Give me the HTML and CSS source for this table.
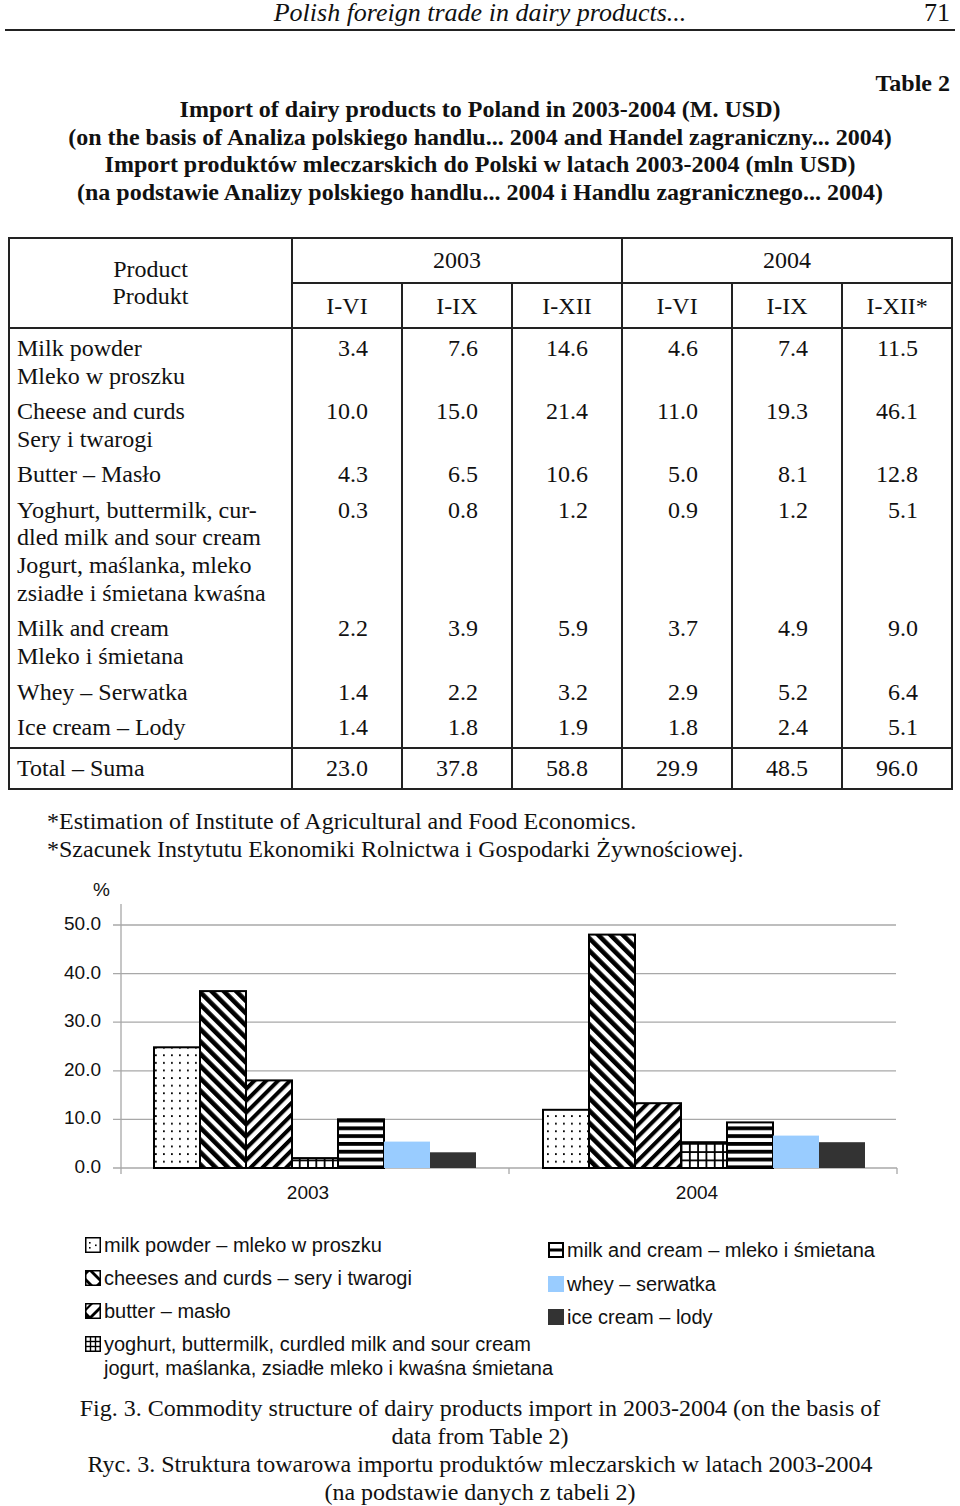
FILE: index.html
```html
<!DOCTYPE html>
<html lang="pl">
<head>
<meta charset="utf-8">
<title>Polish foreign trade in dairy products</title>
<link rel="stylesheet" href="styles.css">
</head>
<body>
<header class="running-head">
  <span class="running-title">Polish foreign trade in dairy products...</span>
  <span class="page-no">71</span>
</header>

<div class="table-label">Table 2</div>
<h1 class="title">Import of dairy products to Poland in 2003-2004 (M. USD)<br>(on the basis of Analiza polskiego handlu... 2004 and Handel zagraniczny... 2004)<br>Import produktów mleczarskich do Polski w latach 2003-2004 (mln USD)<br>(na podstawie Analizy polskiego handlu... 2004 i Handlu zagranicznego... 2004)</h1>

<table class="data">
  <colgroup>
    <col class="c-prod">
    <col class="c-num"><col class="c-num"><col class="c-num">
    <col class="c-num"><col class="c-num"><col class="c-num">
  </colgroup>
  <thead>
    <tr>
      <th rowspan="2" class="prod-head">Product<br>Produkt</th>
      <th colspan="3" class="year">2003</th>
      <th colspan="3" class="year">2004</th>
    </tr>
    <tr>
      <th class="per">I-VI</th><th class="per">I-IX</th><th class="per">I-XII</th>
      <th class="per">I-VI</th><th class="per">I-IX</th><th class="per">I-XII*</th>
    </tr>
  </thead>
  <tbody>
    <tr><td class="name">Milk powder<br>Mleko w proszku</td><td>3.4</td><td>7.6</td><td>14.6</td><td>4.6</td><td>7.4</td><td>11.5</td></tr>
    <tr><td class="name">Cheese and curds<br>Sery i twarogi</td><td>10.0</td><td>15.0</td><td>21.4</td><td>11.0</td><td>19.3</td><td>46.1</td></tr>
    <tr><td class="name">Butter – Masło</td><td>4.3</td><td>6.5</td><td>10.6</td><td>5.0</td><td>8.1</td><td>12.8</td></tr>
    <tr><td class="name">Yoghurt, buttermilk, cur-<br>dled milk and sour cream<br>Jogurt, maślanka, mleko<br>zsiadłe i śmietana kwaśna</td><td>0.3</td><td>0.8</td><td>1.2</td><td>0.9</td><td>1.2</td><td>5.1</td></tr>
    <tr><td class="name">Milk and cream<br>Mleko i śmietana</td><td>2.2</td><td>3.9</td><td>5.9</td><td>3.7</td><td>4.9</td><td>9.0</td></tr>
    <tr><td class="name">Whey – Serwatka</td><td>1.4</td><td>2.2</td><td>3.2</td><td>2.9</td><td>5.2</td><td>6.4</td></tr>
    <tr class="last"><td class="name">Ice cream – Lody</td><td>1.4</td><td>1.8</td><td>1.9</td><td>1.8</td><td>2.4</td><td>5.1</td></tr>
  </tbody>
  <tfoot>
    <tr><td class="name">Total – Suma</td><td>23.0</td><td>37.8</td><td>58.8</td><td>29.9</td><td>48.5</td><td>96.0</td></tr>
  </tfoot>
</table>

<p class="footnote">*Estimation of Institute of Agricultural and Food Economics.<br>*Szacunek Instytutu Ekonomiki Rolnictwa i Gospodarki Żywnościowej.</p>

<svg class="chart" width="960" height="340" viewBox="0 0 960 340" xmlns="http://www.w3.org/2000/svg">
  <defs>
    <pattern id="p-dots" patternUnits="userSpaceOnUse" width="8" height="7.6">
      <rect width="8" height="7.6" fill="#fff"/>
      <rect x="3" y="3" width="1.8" height="1.8" fill="#000"/>
    </pattern>
    <pattern id="p-back" patternUnits="userSpaceOnUse" width="8.7" height="8.7" patternTransform="rotate(-45)">
      <rect width="8.7" height="8.7" fill="#fff"/>
      <rect width="4.6" height="8.7" fill="#000"/>
    </pattern>
    <pattern id="p-fwd" patternUnits="userSpaceOnUse" width="8.4" height="8.4" patternTransform="rotate(45)">
      <rect width="8.4" height="8.4" fill="#fff"/>
      <rect width="4" height="8.4" fill="#000"/>
    </pattern>
    <pattern id="p-grid" patternUnits="userSpaceOnUse" width="8.3" height="8.3">
      <rect width="8.3" height="8.3" fill="#fff"/>
      <rect width="1.8" height="8.3" fill="#000"/>
      <rect width="8.3" height="1.8" fill="#000"/>
    </pattern>
    <pattern id="p-hstripe" patternUnits="userSpaceOnUse" width="8" height="7.8">
      <rect width="8" height="7.8" fill="#fff"/>
      <rect width="8" height="3.8" fill="#000"/>
    </pattern>
  </defs>

  <text class="unit" x="93" y="27">%</text>

  <g class="grid">
    <line x1="113" y1="56" x2="896" y2="56"/>
    <line x1="113" y1="104.6" x2="896" y2="104.6"/>
    <line x1="113" y1="153.2" x2="896" y2="153.2"/>
    <line x1="113" y1="201.8" x2="896" y2="201.8"/>
    <line x1="113" y1="250.4" x2="896" y2="250.4"/>
    <line x1="113" y1="299" x2="897" y2="299"/>
    <line x1="121" y1="35" x2="121" y2="305"/>
    <line x1="509" y1="299" x2="509" y2="305"/>
    <line x1="897" y1="299" x2="897" y2="305"/>
  </g>

  <g class="ylabels">
    <text x="101" y="61">50.0</text>
    <text x="101" y="109.6">40.0</text>
    <text x="101" y="158.2">30.0</text>
    <text x="101" y="206.8">20.0</text>
    <text x="101" y="255.4">10.0</text>
    <text x="101" y="304">0.0</text>
  </g>

  <g class="bars">
    <rect class="bar-outline" x="154" y="178.3" width="46" height="120.7" fill="url(#p-dots)"/>
    <rect class="bar-outline" x="200" y="122.1" width="46" height="176.9" fill="url(#p-back)"/>
    <rect class="bar-outline" x="246" y="211.4" width="46" height="87.6" fill="url(#p-fwd)"/>
    <rect class="bar-outline" x="292" y="289.1" width="46" height="9.9" fill="url(#p-grid)"/>
    <rect class="bar-outline" x="338" y="250.3" width="46" height="48.7" fill="url(#p-hstripe)"/>
    <rect x="384" y="272.6" width="46" height="26.4" fill="#99ccff"/>
    <rect x="430" y="283.3" width="46" height="15.7" fill="#333333"/>

    <rect class="bar-outline" x="543" y="240.8" width="46" height="58.2" fill="url(#p-dots)"/>
    <rect class="bar-outline" x="589" y="65.6" width="46" height="233.4" fill="url(#p-back)"/>
    <rect class="bar-outline" x="635" y="234.2" width="46" height="64.8" fill="url(#p-fwd)"/>
    <rect class="bar-outline" x="681" y="273.2" width="46" height="25.8" fill="url(#p-grid)"/>
    <rect class="bar-outline" x="727" y="253.4" width="46" height="45.6" fill="url(#p-hstripe)"/>
    <rect x="773" y="266.6" width="46" height="32.4" fill="#99ccff"/>
    <rect x="819" y="273.2" width="46" height="25.8" fill="#333333"/>
  </g>

  <g class="xlabels">
    <text x="308" y="330">2003</text>
    <text x="697" y="330">2004</text>
  </g>
</svg>

<div class="legend">
  <div class="legend-col left">
    <div class="legend-item">
      <svg class="legend-icon" viewBox="0 0 16 16"><rect x="0.75" y="0.75" width="14.5" height="14.5" fill="#fff" stroke="#000" stroke-width="1.5"/><rect x="4" y="5" width="1.6" height="1.6" fill="#000"/><rect x="4" y="10" width="1.6" height="1.6" fill="#000"/><rect x="10" y="7.5" width="1.6" height="1.6" fill="#000"/></svg>
      <span>milk powder – mleko w proszku</span>
    </div>
    <div class="legend-item">
      <svg class="legend-icon" viewBox="0 0 16 16"><rect x="0.75" y="0.75" width="14.5" height="14.5" fill="#fff" stroke="#000" stroke-width="1.5"/><polygon points="1,1 5,1 1,5" fill="#000"/><polygon points="4,1 8,1 15,8 15,12" fill="#000"/><polygon points="1,8 1,12 4,15 8,15" fill="#000"/><polygon points="15,11 15,15 11,15" fill="#000"/></svg>
      <span>cheeses and curds – sery i twarogi</span>
    </div>
    <div class="legend-item">
      <svg class="legend-icon" viewBox="0 0 16 16"><rect x="0.75" y="0.75" width="14.5" height="14.5" fill="#fff" stroke="#000" stroke-width="1.5"/><polygon points="1,9 1,15 7,15" fill="#000"/><polygon points="3,15 7,15 15,7 15,3" fill="#000"/><polygon points="1,5 1,8 8,1 5,1" fill="#000"/></svg>
      <span>butter – masło</span>
    </div>
    <div class="legend-item">
      <svg class="legend-icon" viewBox="0 0 16 16"><rect x="0.75" y="0.75" width="14.5" height="14.5" fill="#fff" stroke="#000" stroke-width="1.5"/><line x1="5.5" y1="1" x2="5.5" y2="15" stroke="#000" stroke-width="1.4"/><line x1="10.5" y1="1" x2="10.5" y2="15" stroke="#000" stroke-width="1.4"/><line x1="1" y1="5.5" x2="15" y2="5.5" stroke="#000" stroke-width="1.4"/><line x1="1" y1="10.5" x2="15" y2="10.5" stroke="#000" stroke-width="1.4"/></svg>
      <span>yoghurt, buttermilk, curdled milk and sour cream<br>jogurt, maślanka, zsiadłe mleko i kwaśna śmietana</span>
    </div>
  </div>
  <div class="legend-col right">
    <div class="legend-item">
      <svg class="legend-icon" viewBox="0 0 16 16"><rect x="1" y="1" width="14" height="14" fill="#fff" stroke="#000" stroke-width="2"/><rect x="1" y="6.5" width="14" height="3" fill="#000"/></svg>
      <span>milk and cream – mleko i śmietana</span>
    </div>
    <div class="legend-item">
      <svg class="legend-icon" viewBox="0 0 16 16"><rect width="16" height="16" fill="#99ccff"/></svg>
      <span>whey – serwatka</span>
    </div>
    <div class="legend-item">
      <svg class="legend-icon" viewBox="0 0 16 16"><rect width="16" height="16" fill="#333333"/></svg>
      <span>ice cream – lody</span>
    </div>
  </div>
</div>

<p class="caption">Fig. 3. Commodity structure of dairy products import in 2003-2004 (on the basis of<br>data from Table 2)<br>Ryc. 3. Struktura towarowa importu produktów mleczarskich w latach 2003-2004<br>(na podstawie danych z tabeli 2)</p>
</body>
</html>
```

FILE: styles.css
```css
html, body {
  margin: 0;
  padding: 0;
  background: #fff;
}

body {
  width: 960px;
  font-family: "Liberation Serif", "Times New Roman", serif;
  color: #111;
}

.running-head {
  margin: 0 5px;
  display: grid;
  grid-template-columns: 1fr auto 1fr;
  height: 29px;
  border-bottom: 2px solid #222;
  font-size: 26px;
  line-height: 26px;
}

.running-title {
  grid-column: 2;
  font-style: italic;
}

.page-no {
  grid-column: 3;
  justify-self: end;
  padding-right: 5px;
}

.table-label {
  margin-top: 40px;
  padding-right: 10px;
  text-align: right;
  font-weight: bold;
  font-size: 24px;
  line-height: 25px;
}

.title {
  margin: 0;
  text-align: center;
  font-weight: bold;
  font-size: 24px;
  line-height: 27.7px;
}

.data {
  margin: 30px 0 0 8px;
  border-collapse: collapse;
  table-layout: fixed;
  width: 945px;
  font-size: 24px;
}

.c-prod { width: 283px; }
.c-num { width: 110px; }

.data th,
.data td {
  padding: 0;
  border: 2px solid #222;
  font-weight: normal;
  vertical-align: top;
  line-height: 27.7px;
}

.data thead th {
  line-height: 27px;
}

.prod-head {
  padding-top: 17px !important;
  text-align: center;
}

.year {
  padding: 8px 0 !important;
  text-align: center;
}

.per {
  padding: 9px 0 7px !important;
  text-align: center;
}

.data tbody td {
  border-top: none;
  border-bottom: none;
  padding: 6px 33px 1.8px 0;
  text-align: right;
}

.data tbody tr.last td {
  padding-bottom: 5px;
}

.data tfoot td {
  padding: 6px 33px 6px 0;
  text-align: right;
}

.data td.name {
  text-align: left;
  padding-left: 7px;
  padding-right: 0;
}

.footnote {
  margin: 17px 0 0;
  padding-left: 47px;
  font-size: 24px;
  line-height: 28px;
}

.chart {
  display: block;
  margin-top: 6px;
}

.chart text {
  font-family: "Liberation Sans", Arial, sans-serif;
  font-size: 19px;
  fill: #111;
}

.chart .ylabels text {
  text-anchor: end;
}

.chart .xlabels text {
  text-anchor: middle;
}

.chart .grid line {
  stroke: #a8a8a8;
  stroke-width: 1.3;
}

.chart .bar-outline {
  stroke: #000;
  stroke-width: 2;
}

.legend {
  display: flex;
  padding-top: 24px;
  font-family: "Liberation Sans", Arial, sans-serif;
  font-size: 20px;
  line-height: 24px;
}

.legend-col.left {
  flex: none;
  box-sizing: border-box;
  width: 548px;
  padding-left: 85px;
}

.legend-col.right {
  padding-top: 5px;
}

.legend-item {
  display: flex;
  align-items: flex-start;
  gap: 3px;
  white-space: nowrap;
  margin-bottom: 9px;
}

.legend-col.right .legend-item {
  margin-bottom: 9.5px;
}

.legend-item:last-child {
  margin-bottom: 0;
}

.legend-icon {
  flex: none;
  width: 16px;
  height: 16px;
  margin-top: 4px;
}

.caption {
  margin: 15px 0 0;
  text-align: center;
  font-size: 24px;
  line-height: 27.7px;
}
```
